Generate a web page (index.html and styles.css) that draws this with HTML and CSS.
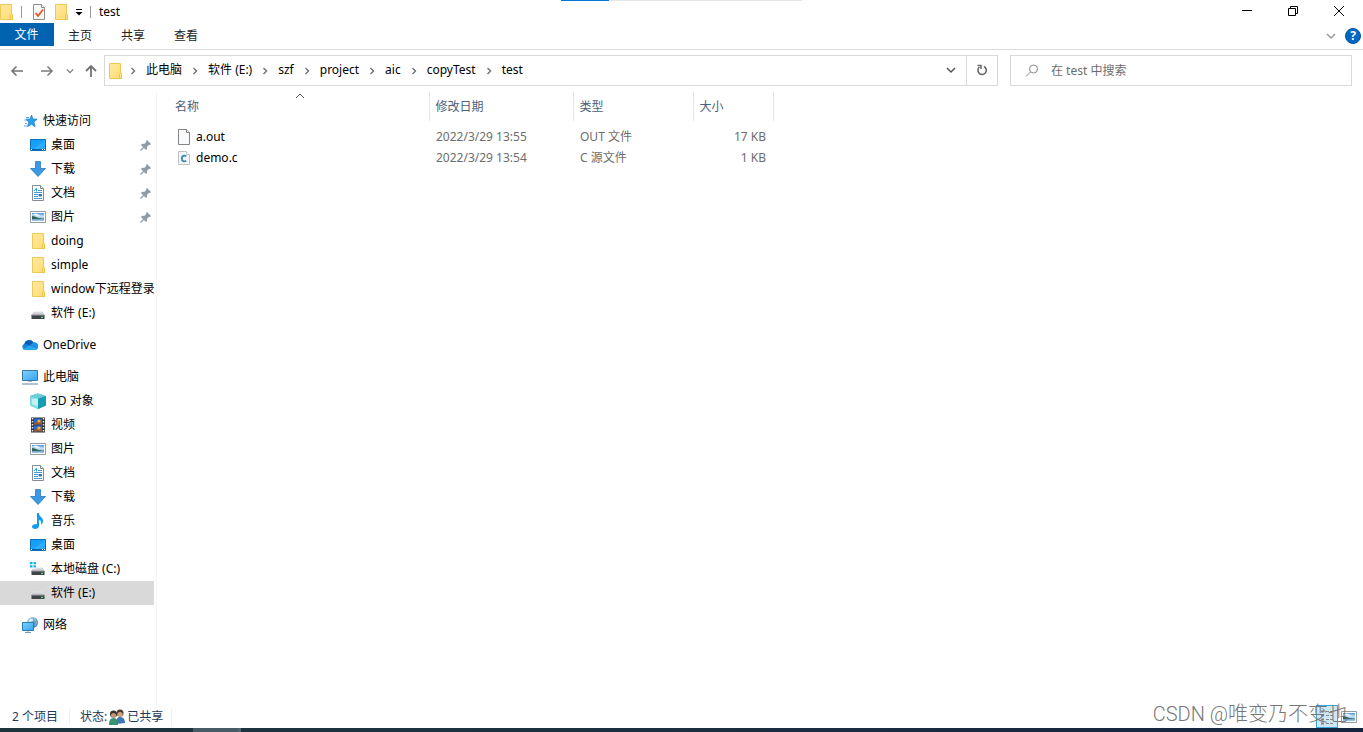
FILE: index.html
```
<!DOCTYPE html>
<html lang="zh-CN">
<head>
<meta charset="utf-8">
<title>test</title>
<link rel="stylesheet" href="styles.css">
</head>
<body>
<svg class="sprite" aria-hidden="true">
  <defs>
    <linearGradient id="gFolder" x1="0" y1="0" x2="1" y2="1"><stop offset="0" stop-color="#ffe9a2"/><stop offset="1" stop-color="#ffdb70"/></linearGradient>
    <linearGradient id="gScreen" x1="0" y1="0" x2="1" y2="1"><stop offset="0" stop-color="#7fd0ff"/><stop offset="1" stop-color="#35a3f5"/></linearGradient>
    <linearGradient id="gDesk" x1="0" y1="0" x2="1" y2="1"><stop offset="0" stop-color="#149af8"/><stop offset=".55" stop-color="#19a2ff"/><stop offset=".56" stop-color="#38b0ff"/><stop offset="1" stop-color="#1e9ffa"/></linearGradient>
    <linearGradient id="gSky" x1="0" y1="0" x2="0" y2="1"><stop offset="0" stop-color="#4f97e0"/><stop offset=".5" stop-color="#d5ebf8"/><stop offset=".7" stop-color="#5f94b8"/><stop offset="1" stop-color="#a3d0f2"/></linearGradient>
    <linearGradient id="gDrive" x1="0" y1="0" x2="0" y2="1"><stop offset="0" stop-color="#e3e4e6"/><stop offset="1" stop-color="#bfc1c4"/></linearGradient>
    <linearGradient id="gGlobe" x1="0" y1="0" x2="1" y2="1"><stop offset="0" stop-color="#b8dced"/><stop offset="1" stop-color="#256f9f"/></linearGradient>
  </defs>
  <symbol id="folder" viewBox="0 0 16 16"><path d="M2.500.5h11v10l1 .5v4.500h-12z" fill="url(#gFolder)" stroke="#edca55"/><path d="M12.500 15.500v-4l1-1.500 1 1v4.500z" fill="#ffe594" stroke="#e6bd3d" stroke-width=".8"/></symbol>
  <symbol id="check" viewBox="0 0 16 16"><path d="M2.500.5h8l3 3v12h-11z" fill="#f7f8fa" stroke="#8d8d8d"/><path d="M10.500.5v3h3" fill="#fff" stroke="#8d8d8d"/><path d="M4.500 9l2.500 3 5-6.500" fill="none" stroke="#f15a22" stroke-width="1.800"/></symbol>
  <symbol id="star" viewBox="0 0 16 16"><path d="M9.500 2l1.400 4 4.300.2-3.300 2.800 1.200 4.700-3.600-2.500-4 2.500 1.400-4.500-3-3 4.200-.2z" fill="#2aa0ee" stroke="#1878c8" stroke-width=".7"/><path d="M4 4.500h3M2.500 7H5M3 10.500h2M2 13h3" stroke="#5aa9df"/></symbol>
  <symbol id="desktop" viewBox="0 0 16 16"><path d="M.5 2.500h15v11h-15z" fill="url(#gDesk)" stroke="#0870bd"/><path d="M1 12.500h14" stroke="#0a5ea3"/><path d="M1 12.500h1M12 12.500h1M14 12.500h1" stroke="#fff"/></symbol>
  <symbol id="download" viewBox="0 0 16 16"><path d="M5.500.5h5v7h5l-7.500 8-7.500-8h5z" fill="#3e98e8" stroke="#2878bd" stroke-width=".8"/></symbol>
  <symbol id="document" viewBox="0 0 16 16"><path d="M2.500.5h8l3 3v12h-11z" fill="#fff" stroke="#858b90"/><path d="M10.500.5v3h3" fill="#eee" stroke="#858b90"/><path d="M8 5.500h4M4 7.500h8M4 9.500h4M4 11.500h4M4 13.500h8" stroke="#4a9bd4"/><path d="M8.500 9h3.500v2.500H8.500z" fill="#2c81bd"/><path d="M4 6l2.500-3v3.500" stroke="#1eaaf1" fill="none"/></symbol>
  <symbol id="picture" viewBox="0 0 16 16"><path d="M.5 2.500h15v11h-15z" fill="#fff" stroke="#949ba1"/><path d="M2 4h12v8H2z" fill="url(#gSky)"/><path d="M2 7c3 0 4 1.500 7 2.300 2 .4 3 .7 5 .7H2z" fill="#30665a"/><path d="M2 5.500l4-1 5 2-4 .5z" fill="#eef8fc"/></symbol>
  <symbol id="drive" viewBox="0 0 16 16"><path d="M3.500 6.500h9L14.500 10h-13z" fill="url(#gDrive)"/><path d="M1.500 10h13v4h-13z" fill="#404347"/><path d="M1.500 10.300h13" stroke="#777b80"/><path d="M11 12.300h2" stroke="#4de85d" stroke-width="1.200"/></symbol>
  <symbol id="cdrive" viewBox="0 0 16 16"><path d="M0 1h2.500v2.200H0zM3.500 1H6v2.200H3.500zM0 4.200h2.500v2.300H0zM3.500 4.200H6v2.300H3.500z" fill="#12b4ee"/><path d="M6.500 6.500h6l2 3.500h-13l1-2.500h4z" fill="url(#gDrive)"/><path d="M1.500 10h13v4h-13z" fill="#404347"/><path d="M1.500 10.300h13" stroke="#777b80"/><path d="M11 12.300h2" stroke="#4de85d" stroke-width="1.200"/></symbol>
  <symbol id="cloud" viewBox="0 0 16 16"><path d="M3 13a3.300 3.300 0 0 1-.6-6.300A5 5 0 0 1 11.500 5.500a3.800 3.800 0 0 1 1.500 7.500z" fill="#1284dc"/><path d="M2.500 6.700a5 5 0 0 1 9-1.200L8.500 8.500z" fill="#0b5cb2"/><path d="M11.500 5.500a3.800 3.800 0 0 1 4.200 5.500L8.500 8z" fill="#1b94e6"/><path d="M1 12l7-3.500 7.500 3a3 3 0 0 1-2.500 1.500H3z" fill="#2ba8ef"/></symbol>
  <symbol id="pc" viewBox="0 0 16 16"><path d="M.5 1.500h15v10H.5z" fill="url(#gScreen)" stroke="#397ba5"/><path d="M6 12.500h4" stroke="#a9b9c6"/><path d="M0 15h16" stroke="#8399ac" stroke-width="1.200"/></symbol>
  <symbol id="cube" viewBox="0 0 16 16"><path d="M0 3l8-2.500L16 3v9.500L8 16l-8-3.500z" fill="#2eb6ca"/><path d="M0 3l8 2.500V16l-8-3.500z" fill="#86dbe4"/><path d="M2 6l6-.5v8L2 11z" fill="#c1f2f3"/><path d="M8 5.500L16 3v9.500L8 16z" fill="#159db4"/><path d="M0 3L8 .5 16 3 8 5.500z" fill="#69cdd9"/></symbol>
  <symbol id="video" viewBox="0 0 16 16"><path d="M1 .5h14v15H1z" fill="#333"/><path d="M2.500 1v14M13.500 1v14" stroke="#e5e5e5" stroke-width="1.500" stroke-dasharray="1.500 1.500"/><path d="M4 1.500h8v6H4zM4 8.500h8v6H4z" fill="#2f64d5"/><path d="M4 6.500l3-2 2 1 3-2v4H4zM4 13.500l4-3 4 2v2H4z" fill="#9b5a27"/><circle cx="9" cy="4" r="1.600" fill="#efb628"/><circle cx="9" cy="11" r="1.600" fill="#efb628"/></symbol>
  <symbol id="music" viewBox="0 0 16 16"><path d="M7 0h2c0 4 4 4 4 8 0 2-1 3-2 4 1-4-1-5-2-5v6c0 2-2 3-4 3s-3-1-3-2.500S4 11 7 11z" fill="#109cf5"/></symbol>
  <symbol id="network" viewBox="0 0 16 16"><circle cx="10.500" cy="5.500" r="5.500" fill="url(#gGlobe)"/><path d="M12 1c2 2 3 5 1 8" fill="none" stroke="#9fd0e4" stroke-width=".8"/><path d="M7 3c2-2 4-1 4 0s-2 2-4 2z" fill="#d9eef5"/><path d="M.5 5.500h11v8H.5z" fill="url(#gScreen)" stroke="#267eae"/><path d="M3 15.500h6M6 14v1.500" stroke="#8699a8"/></symbol>
  <symbol id="pin" viewBox="0 0 12 12"><path d="M7 1l4 4-1 1-1-.3-2 2 .2 2L6 11 1 6l1.200-1.200 2 .2 2-2L6 2z" fill="#8f9ba6"/><path d="M4 8l-3.500 3.500" stroke="#8f9ba6" stroke-width="1.300"/></symbol>
  <symbol id="file" viewBox="0 0 16 16"><path d="M2.500.5h8l3 3v12h-11z" fill="#f9fafb" stroke="#858585"/><path d="M10.500.5v3h3" fill="#fff" stroke="#858585"/></symbol>
  <symbol id="cfile" viewBox="0 0 16 16"><path d="M2.500 1.500h8l3 3v10h-11z" fill="#f5f8fa" stroke="#bdc2c6"/><path d="M10.500 1.500v3h3" fill="#fff" stroke="#bdc2c6"/><path d="M10.300 6.300C8 4.800 5.800 6 5.800 8.500s2.200 3.700 4.500 2.200" fill="none" stroke="#3788ad" stroke-width="1.800"/></symbol>
  <symbol id="left" viewBox="0 0 14 14"><path d="M13 7H2M6.500 2.500L2 7l4.500 4.500" fill="none" stroke="#737373" stroke-width="1.600"/></symbol>
  <symbol id="right" viewBox="0 0 14 14"><path d="M1 7h11M7.500 2.500L12 7l-4.500 4.500" fill="none" stroke="#7c7c7c" stroke-width="1.600"/></symbol>
  <symbol id="up" viewBox="0 0 14 14"><path d="M7 13V2M2 7l5-5 5 5" fill="none" stroke="#737373" stroke-width="1.800"/></symbol>
  <symbol id="down" viewBox="0 0 10 10"><path d="M1 3l4 4 4-4" fill="none" stroke="currentColor" stroke-width="1.500"/></symbol>
  <symbol id="next" viewBox="0 0 8 8"><path d="M2.500 1L5.500 4 2.500 7" fill="none" stroke="#707070" stroke-width="1.400"/></symbol>
  <symbol id="users" viewBox="0 0 18 16"><circle cx="12" cy="4" r="3.500" fill="#4a3b32"/><circle cx="12" cy="5.500" r="2.600" fill="#d3a27c"/><path d="M8 15c0-5 1-7 4-7s5 2 5 6z" fill="#3f78b5"/><circle cx="5.500" cy="5" r="3.500" fill="#37322e"/><circle cx="5.500" cy="6.500" r="2.500" fill="#c99470"/><path d="M1 16c0-4 1-7 4.500-7s4.500 3 4.500 7z" fill="#38946e"/></symbol>
</svg>

<div class="window">
  <header>
    <div class="titlebar">
      <div class="quick">
        <svg class="ic"><use href="#folder"/></svg>
        <span class="bar"></span>
        <button class="plain" aria-label="属性"><svg class="ic"><use href="#check"/></svg></button>
        <button class="plain" aria-label="新建文件夹"><svg class="ic"><use href="#folder"/></svg></button>
        <button class="plain" aria-label="自定义快速访问工具栏"><svg class="more" viewBox="0 0 8 8"><path d="M1 1.500h6" stroke="#000"/><path d="M.5 4h7L4 7.500z"/></svg></button>
        <span class="bar"></span>
        <span class="title">test</span>
      </div>
      <div class="progress"></div>
      <div class="controls">
        <button class="plain" aria-label="最小化"><svg viewBox="0 0 12 12"><path d="M1 5.500h10" stroke="#000"/></svg></button>
        <button class="plain" aria-label="还原"><svg viewBox="0 0 12 12" fill="none" stroke="#000"><path d="M1.500 3.500h7v7h-7zM3.500 3.500v-2h7v7h-2"/></svg></button>
        <button class="plain" aria-label="关闭"><svg viewBox="0 0 12 12"><path d="M1 1l10 10M11 1L1 11" stroke="#000"/></svg></button>
      </div>
    </div>
    <div class="tabs">
      <button class="tab active">文件</button><button class="tab">主页</button><button class="tab">共享</button><button class="tab">查看</button>
      <div class="ribbon-tools">
        <button class="plain" aria-label="展开功能区"><svg class="small gray"><use href="#down"/></svg></button>
        <button class="help" aria-label="帮助">?</button>
      </div>
    </div>
  </header>

  <div class="navbar">
    <div class="arrows">
      <button class="plain" aria-label="后退"><svg class="arrow"><use href="#left"/></svg></button>
      <button class="plain forward" aria-label="前进"><svg class="arrow"><use href="#right"/></svg></button>
      <button class="plain recent" aria-label="最近浏览的位置"><svg class="tiny"><use href="#down"/></svg></button>
      <button class="plain" aria-label="上移"><svg class="arrow"><use href="#up"/></svg></button>
    </div>
    <div class="address">
      <svg class="ic"><use href="#folder"/></svg>
      <svg class="sep"><use href="#next"/></svg><button class="plain">此电脑</button>
      <svg class="sep"><use href="#next"/></svg><button class="plain">软件 (E:)</button>
      <svg class="sep"><use href="#next"/></svg><button class="plain">szf</button>
      <svg class="sep"><use href="#next"/></svg><button class="plain">project</button>
      <svg class="sep"><use href="#next"/></svg><button class="plain">aic</button>
      <svg class="sep"><use href="#next"/></svg><button class="plain">copyTest</button>
      <svg class="sep"><use href="#next"/></svg><button class="plain">test</button>
      <button class="plain history" aria-label="历史位置"><svg class="small"><use href="#down"/></svg></button>
      <button class="plain refresh" aria-label="刷新"><svg viewBox="0 0 12 12"><path d="M3.500 3A4.200 4.200 0 1 0 8 2.500" fill="none" stroke="#666" stroke-width="1.600"/><path d="M1.500 1.500H5V5" fill="none" stroke="#666" stroke-width="1.500"/></svg></button>
    </div>
    <div class="search">
      <svg viewBox="0 0 14 14"><circle cx="8.500" cy="5" r="4" fill="none" stroke="#888"/><path d="M5.500 8L1 12.500" stroke="#888"/></svg>
      <input type="text" aria-label="搜索" placeholder="在 test 中搜索">
    </div>
  </div>

  <div class="body">
    <nav class="tree">
      <ul>
        <li><a href="#" class="root"><svg class="ic"><use href="#star"/></svg><span>快速访问</span></a></li>
        <li><a href="#"><svg class="ic"><use href="#desktop"/></svg><span>桌面</span><svg class="pin"><use href="#pin"/></svg></a></li>
        <li><a href="#"><svg class="ic"><use href="#download"/></svg><span>下载</span><svg class="pin"><use href="#pin"/></svg></a></li>
        <li><a href="#"><svg class="ic"><use href="#document"/></svg><span>文档</span><svg class="pin"><use href="#pin"/></svg></a></li>
        <li><a href="#"><svg class="ic"><use href="#picture"/></svg><span>图片</span><svg class="pin"><use href="#pin"/></svg></a></li>
        <li><a href="#"><svg class="ic"><use href="#folder"/></svg><span>doing</span></a></li>
        <li><a href="#"><svg class="ic"><use href="#folder"/></svg><span>simple</span></a></li>
        <li><a href="#"><svg class="ic"><use href="#folder"/></svg><span>window下远程登录</span></a></li>
        <li><a href="#"><svg class="ic"><use href="#drive"/></svg><span>软件 (E:)</span></a></li>
      </ul>
      <ul>
        <li><a href="#" class="root"><svg class="ic"><use href="#cloud"/></svg><span>OneDrive</span></a></li>
      </ul>
      <ul>
        <li><a href="#" class="root"><svg class="ic"><use href="#pc"/></svg><span>此电脑</span></a></li>
        <li><a href="#"><svg class="ic"><use href="#cube"/></svg><span>3D 对象</span></a></li>
        <li><a href="#"><svg class="ic"><use href="#video"/></svg><span>视频</span></a></li>
        <li><a href="#"><svg class="ic"><use href="#picture"/></svg><span>图片</span></a></li>
        <li><a href="#"><svg class="ic"><use href="#document"/></svg><span>文档</span></a></li>
        <li><a href="#"><svg class="ic"><use href="#download"/></svg><span>下载</span></a></li>
        <li><a href="#"><svg class="ic"><use href="#music"/></svg><span>音乐</span></a></li>
        <li><a href="#"><svg class="ic"><use href="#desktop"/></svg><span>桌面</span></a></li>
        <li><a href="#"><svg class="ic"><use href="#cdrive"/></svg><span>本地磁盘 (C:)</span></a></li>
        <li><a href="#" class="selected"><svg class="ic"><use href="#drive"/></svg><span>软件 (E:)</span></a></li>
      </ul>
      <ul>
        <li><a href="#" class="root"><svg class="ic"><use href="#network"/></svg><span>网络</span></a></li>
      </ul>
    </nav>
    <main>
      <table>
        <colgroup><col class="c-name"><col class="c-date"><col class="c-type"><col class="c-size"></colgroup>
        <thead>
          <tr><th><span>名称</span><svg class="sort" viewBox="0 0 10 6"><path d="M1 5l4-4 4 4" fill="none" stroke="#555"/></svg></th><th>修改日期</th><th>类型</th><th>大小</th></tr>
        </thead>
        <tbody>
          <tr><td><div class="name"><svg class="ic"><use href="#file"/></svg>a.out</div></td><td>2022/3/29 13:55</td><td>OUT 文件</td><td>17 KB</td></tr>
          <tr><td><div class="name"><svg class="ic"><use href="#cfile"/></svg>demo.c</div></td><td>2022/3/29 13:54</td><td>C 源文件</td><td>1 KB</td></tr>
        </tbody>
      </table>
    </main>
  </div>

  <footer class="status">
    <span class="count">2 个项目</span>
    <span class="state">状态:<svg class="users"><use href="#users"/></svg>已共享</span>
    <div class="views">
      <button class="view on" aria-label="详细信息"><svg viewBox="0 0 16 16"><path d="M2 2.500h3M2 6.500h3M2 10.500h3M2 14.500h3" stroke="#8a8078" stroke-width="2"/><path d="M7 2.500h3M11 2.500h3M7 6.500h3M11 6.500h3M7 10.500h3M11 10.500h3M7 14.500h3M11 14.500h3" stroke="#888"/></svg></button>
      <button class="view" aria-label="大图标"><svg class="ic"><use href="#picture"/></svg></button>
    </div>
    <div class="watermark">CSDN @唯变乃不变也</div>
  </footer>
  <div class="taskbar"><span></span></div>
</div>
</body>
</html>
```
FILE: styles.css
```
* { box-sizing: border-box; }
body {
  margin: 0;
  background: #fff;
  color: #000;
  font: 12px/16px "Noto Sans", "Noto Sans CJK SC", sans-serif;
}
button, input { font: inherit; color: inherit; }
svg { display: block; flex: none; }
ul { list-style: none; margin: 0; padding: 0; }
.sprite { position: absolute; width: 0; height: 0; }
.window { display: flex; flex-direction: column; min-height: 100vh; }
.plain { display: flex; align-items: center; justify-content: center; padding: 0; border: 0; background: none; white-space: nowrap; }
.ic { width: 16px; height: 16px; }

.titlebar { display: grid; grid-template-columns: 1fr 241px 1fr; height: 23px; }
.quick { display: flex; align-items: center; margin-left: -2px; }
.bar { width: 1px; height: 12px; margin-left: 7px; background: #999; }
.bar + .plain { margin-left: 9px; }
.quick .plain + .plain { margin-left: 6px; }
.more { width: 8px; height: 8px; }
.title { margin-left: 8px; }
.progress { height: 1px; background: linear-gradient(90deg, #0078d7 20%, #e5e5e5 20%); }
.controls { display: flex; align-items: flex-start; justify-content: flex-end; margin-right: 1px; }
.controls .plain { width: 46px; height: 21px; }
.controls svg { width: 12px; height: 12px; }

.tabs { display: flex; height: 27px; padding-bottom: 3px; border-bottom: 1px solid #dadbdc; }
.tab { width: 53px; padding: 2px 1px 0 0; border: 0; background: none; color: #222; }
.tab.active { width: 54px; padding-top: 0; background: #0063b1; color: #fff; }
.ribbon-tools { display: flex; align-items: center; gap: 9px; margin-left: auto; padding: 2px 2px 0 0; }
.small { width: 10px; height: 10px; color: #555; }
.gray { color: #999; }
.help { width: 16px; height: 16px; padding: 0; border: 1px solid #07549b; border-radius: 50%; background: #0067c5; color: #fff; font-weight: 700; line-height: 14px; }

.navbar { display: flex; padding: 5px 11px 0 10px; }
.arrows { display: flex; align-items: center; width: 94px; }
.forward { margin: 0 12px 0 16px; }
.recent { margin-right: 10px; }
.arrow { width: 14px; height: 14px; }
.tiny { width: 8px; height: 8px; color: #777; }
.address { display: flex; align-items: center; flex: 1; height: 31px; padding: 0 0 0 2px; border: 1px solid #d9d9d9; }
.address .plain { padding-bottom: 1px; }
.sep { width: 8px; height: 8px; margin: 0 9px; }
.ic + .sep { margin-left: 6px; }
.history { width: 30px; height: 29px; margin-left: auto; }
.refresh { width: 31px; height: 29px; border-left: 1px solid #d9d9d9; }
.refresh svg { width: 12px; height: 12px; }
.search { display: flex; align-items: center; width: 342px; margin-left: 12px; padding-left: 14px; border: 1px solid #d9d9d9; }
.search svg { width: 14px; height: 14px; }
.search input { flex: 1; min-width: 0; margin-left: 12px; padding: 0; border: 0; outline: 0; background: none; }
.search input::placeholder { color: #6d6d6d; opacity: 1; }

.body { display: flex; flex: 1; padding-top: 6px; }
.tree { width: 157px; padding: 17px 2px 0 0; border-right: 1px solid #f3f3f3; }
.tree ul + ul { margin-top: 8px; }
.tree a { display: flex; align-items: center; height: 24px; padding-left: 30px; color: #000; text-decoration: none; white-space: nowrap; overflow: hidden; }
.tree a.root { padding-left: 22px; }
.tree a span { margin-left: 5px; }
.tree a.selected { background: #d9d9d9; }
.pin { width: 12px; height: 12px; margin: 0 2px 0 auto; }

main { flex: 1; }
table { table-layout: fixed; width: 616px; border-collapse: collapse; }
.c-name { width: 272px; }
.c-date { width: 144px; }
.c-type { width: 120px; }
.c-size { width: 80px; }
th { position: relative; height: 29px; padding: 0 0 0 6px; border-right: 1px solid #e5e5e5; color: #4c607a; font-weight: 400; text-align: left; }
th:first-child { padding-left: 18px; }
.sort { position: absolute; top: 1px; left: 138px; width: 10px; height: 6px; }
tbody::before { content: ""; display: block; height: 5px; }
td { height: 21px; padding: 0 0 0 7px; color: #6d6d6d; }
td:last-child { padding-right: 7px; text-align: right; }
.name { display: flex; align-items: center; gap: 4px; padding-left: 12px; color: #000; }

.status { position: relative; display: flex; align-items: center; height: 23px; padding-left: 12px; color: #1e395b; }
.count { padding-right: 11px; border-right: 1px solid #f0f0f0; }
.state { display: flex; align-items: center; margin-left: 10px; padding-right: 8px; border-right: 1px solid #f0f0f0; }
.users { width: 18px; height: 16px; margin: 0 1px; }
.views { display: flex; align-items: center; margin-left: auto; padding-right: 3px; }
.view { display: flex; align-items: center; justify-content: center; width: 22px; height: 23px; padding: 0; border: 0; background: none; }
.view.on { border: 1px solid #3aa6dd; background: #cce8f6; }
.view.on svg { width: 16px; height: 16px; }
.watermark { position: absolute; right: 15px; bottom: 2px; color: #777; font: 300 20px/24px Roboto, "Noto Sans CJK SC", sans-serif; pointer-events: none; }
.taskbar { height: 4px; padding-left: 193px; background: linear-gradient(90deg, #1d343d, #1b3140 40%, #15233f); }
.taskbar span { display: block; width: 48px; height: 4px; border-right: 3px solid #52666f; background: #465b66; }
```
